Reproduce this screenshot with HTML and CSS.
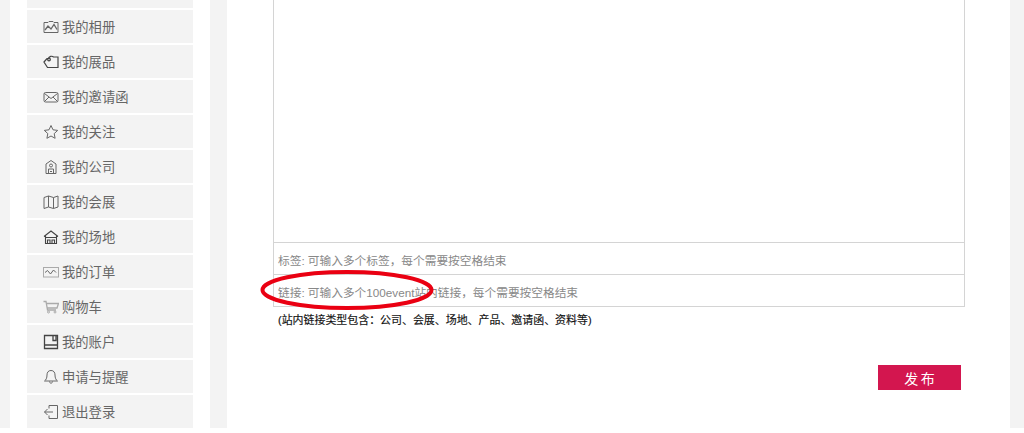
FILE: index.html
```html
<!DOCTYPE html>
<html lang="zh-CN">
  <head>
    <meta charset="UTF-8" />
    <title>发布</title>
    <link rel="stylesheet" href="styles.css">
  </head>
  <body>
    <div class="page">
      <aside class="sidebar">
        <ul class="menu">
          <li class="menu-cut"></li>
          <li class="menu-item">
            <svg class="icon" viewBox="0 0 16 16"><path d="M1 3.500h4l1-1h4l1 1h4v10H1z"/><path d="M2 11l3-4 3 3 3-4.500 3 5" stroke-width="1.300"/></svg>
            我的相册
          </li>
          <li class="menu-item">
            <svg class="icon icon-dark" viewBox="0 0 16 16"><path d="M1 8l3-3.500h1.500c.5-2 3.500-3 5-1.500h4.500v10.500H4.500z" stroke-width="1.200"/><circle cx="6" cy="5.500" r="1.300" stroke-width="1.300"/></svg>
            我的展品
          </li>
          <li class="menu-item">
            <svg class="icon" viewBox="0 0 16 16"><rect x="1" y="3.500" width="14" height="9.500" rx="1.500"/><path d="M1.500 4.500l6.500 5 6.500-5M1.500 12.500l4.500-4.500M14.500 12.500l-4.500-4.500"/></svg>
            我的邀请函
          </li>
          <li class="menu-item">
            <svg class="icon" viewBox="0 0 16 16"><path d="M8 1.500l2 4.300 4.700.6-3.500 3.200.9 4.700L8 12l-4.100 2.300.9-4.700L1.300 6.400 6 5.800z"/></svg>
            我的关注
          </li>
          <li class="menu-item">
            <svg class="icon" viewBox="0 0 16 16"><path d="M3 5l5-3.500L13 5v9.500H3z"/><circle cx="8" cy="6.500" r="1.500"/><path d="M5.500 14.500V10h5v4.500M7 12.500h2"/></svg>
            我的公司
          </li>
          <li class="menu-item">
            <svg class="icon" viewBox="0 0 16 16"><path d="M1 3.500l4.500-1.500 5 1.500 4.500-1.500v11l-4.500 1.500-5-1.500L1 14.500zM5.500 2v11M10.500 3.500v11"/></svg>
            我的会展
          </li>
          <li class="menu-item">
            <svg class="icon icon-dark" viewBox="0 0 16 16"><path d="M1 7.500L8 2l7 5.500M2.500 6.500v8h11v-8M3 8.500h10M4.500 14.500V11h2.500v3.500M9 14.500V11h2.500v3.500" stroke-width="1.100"/></svg>
            我的场地
          </li>
          <li class="menu-item">
            <svg class="icon icon-light" viewBox="0 0 16 16"><rect x=".5" y="3.500" width="15" height="9.500"/><path class="icon-line" d="M2 8.500l2.500-2 3 3.500 3-4 2.500 2.500"/></svg>
            我的订单
          </li>
          <li class="menu-item">
            <svg class="icon icon-light" viewBox="0 0 16 16"><path d="M.5 2.500h2.500l1.500 8.500h8.500M3.500 4.500h12l-1.500 4.500H4.500" stroke-width="1.300"/><circle cx="5.500" cy="13" r="1"/><circle cx="12" cy="13" r="1"/></svg>
            购物车
          </li>
          <li class="menu-item">
            <svg class="icon icon-dark" viewBox="0 0 16 16"><path d="M1.500 1.500h13v13h-13zM1.500 11h13M10 1.500v5h3v-5" stroke-width="1.300"/></svg>
            我的账户
          </li>
          <li class="menu-item">
            <svg class="icon" viewBox="0 0 16 16"><path d="M8 1.500c-2.800 0-4 2-4 4.500 0 3-1 5-2.500 6h13c-1.500-1-2.500-3-2.500-6 0-2.500-1.200-4.500-4-4.500zM6.500 12.500c0 2.200 3 2.200 3 0"/></svg>
            申请与提醒
          </li>
          <li class="menu-item">
            <svg class="icon" viewBox="0 0 16 16"><path d="M6 4.500V1.500h8.500v13H6v-3M10 8H1.500M4.500 5L1.500 8l3 3"/></svg>
            退出登录
          </li>
        </ul>
      </aside>

      <main class="content">
        <div class="form-box">
          <div class="editor"></div>
          <div class="field">标签: 可输入多个标签，每个需要按空格结束</div>
          <div class="field">链接: 可输入多个100event站内链接，每个需要按空格结束</div>
          <!-- red mark drawn over the link field -->
          <svg class="mark" viewBox="0 0 176 44"><ellipse cx="88" cy="22" rx="84.500" ry="18"/></svg>
        </div>
        <p class="note">(站内链接类型包含：公司、会展、场地、产品、邀请函、资料等)</p>
        <div class="actions">
          <button class="btn-publish">发 布</button>
        </div>
      </main>
    </div>
  </body>
</html>
```

FILE: styles.css
```css
* { box-sizing: border-box; }
body {
  margin: 0;
  background: #fff;
  font-family: "Liberation Sans", "Noto Sans CJK SC", sans-serif;
  overflow: hidden;
}
.page {
  display: flex;
  gap: 17px;
  height: 428px;
  padding: 0 14px 0 10px;
  background: #f3f3f3;
  overflow: hidden;
}

/* Sidebar */
.sidebar {
  width: 200px;
  flex: none;
  background: #fff;
  padding: 0 17px;
}
.menu {
  list-style: none;
  margin: 0;
  padding: 0;
  display: flex;
  flex-direction: column;
  gap: 2px;
}
.menu-cut { height: 8px; background: #f3f3f3; }
.menu-item {
  height: 33px;
  display: flex;
  align-items: center;
  gap: 3px;
  padding-left: 16px;
  background: #f3f3f3;
  color: #666;
  font-size: 13.300px;
}
.icon {
  width: 16px;
  height: 16px;
  flex: none;
  fill: none;
  stroke: #666;
  stroke-width: 1;
}
.icon-dark { stroke: #444; }
.icon-light { stroke: #aaa; }
.icon-line { stroke: #666; }

/* Main panel */
.content {
  flex: 1;
  background: #fff;
  padding: 0 45px 0 46px;
}
.form-box { position: relative; }
.editor {
  height: 243px;
  border: 1px solid #d4d4d4;
  border-top: none;
}
.field {
  height: 32px;
  padding: 1px 0 0 4px;
  display: flex;
  align-items: center;
  border: 1px solid #d4d4d4;
  border-top: none;
  color: #888;
  font-size: 11.700px;
}
.mark {
  position: absolute;
  left: -14px;
  top: 268px;
  width: 176px;
  height: 44px;
  fill: none;
  stroke: #ea0012;
  stroke-width: 4;
}
.note {
  margin: 6px 0 0 5px;
  color: #111;
  font-size: 10.950px;
  line-height: 14px;
  -webkit-text-stroke: 0.15px #111;
}
.actions {
  display: flex;
  justify-content: flex-end;
  margin-top: 38px;
  padding-right: 4px;
}
.btn-publish {
  width: 83px;
  height: 25px;
  padding: 0;
  border: none;
  background: #d3164f;
  color: #fff;
  font-family: inherit;
  font-size: 14px;
  word-spacing: -1.500px;
}
```
